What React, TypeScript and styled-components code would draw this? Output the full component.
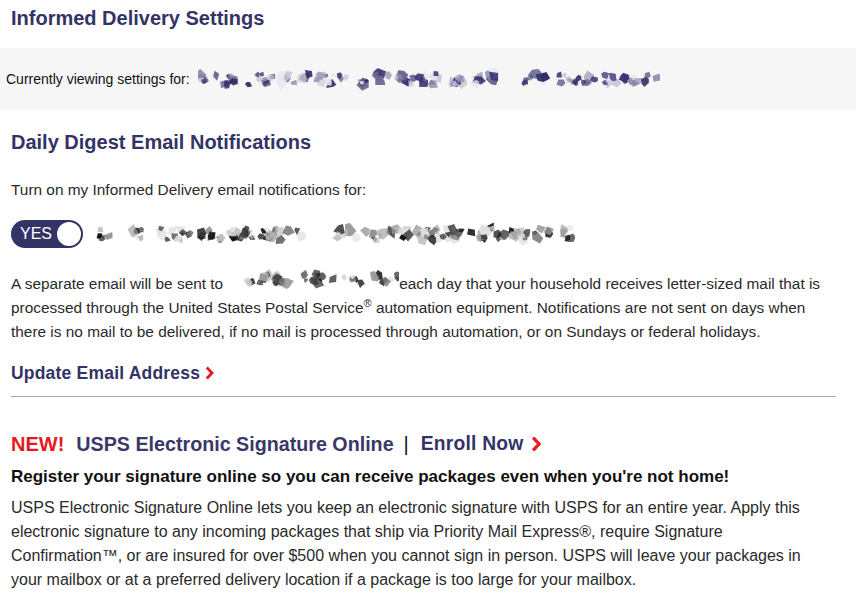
import React from "react";
import styled, { createGlobalStyle } from "styled-components";

const NAVY = "#333366";
const RED = "#e71921";

const GlobalStyle = createGlobalStyle`
  html, body { margin: 0; padding: 0; background: #ffffff; }
  body {
    font-family: "Liberation Sans", Helvetica, Arial, sans-serif;
    color: #2a2a2a;
    -webkit-font-smoothing: antialiased;
  }
`;

const Page = styled.div`
  width: 856px;
  display: flex;
  flex-direction: column;
`;

const PageTitle = styled.h1`
  margin: 0;
  padding: 6px 11px 0;
  font-size: 20px;
  line-height: 24px;
  font-weight: 700;
  color: ${NAVY};
`;

const ViewingBar = styled.div`
  margin-top: 18px;
  height: 62px;
  background: #f6f6f6;
  display: flex;
  align-items: center;
  gap: 8px;
  padding-left: 6px;
  font-size: 14px;
  color: #111;
`;

const Section = styled.section`
  padding: 0 20px 0 11px;
  display: flex;
  flex-direction: column;
  align-items: flex-start;
`;

const SectionTitle = styled.h2`
  margin: 20px 0 0;
  font-size: 20px;
  line-height: 24px;
  font-weight: 700;
  color: ${NAVY};
`;

const Text = styled.p<{ $top: number; $size: number }>`
  margin: ${(p) => p.$top}px 0 0;
  font-size: ${(p) => p.$size}px;
  line-height: 24px;
  color: #2a2a2a;
  white-space: nowrap;
`;

const ToggleRow = styled.div`
  margin-top: 18px;
  display: flex;
  align-items: center;
  gap: 12px;
`;

const Toggle = styled.button`
  width: 72px;
  height: 28px;
  border: none;
  border-radius: 14px;
  background: ${NAVY};
  color: #fff;
  display: flex;
  align-items: center;
  justify-content: space-between;
  padding: 0 2px 0 9px;
  font-family: inherit;
  font-size: 16px;
  cursor: pointer;
`;

const Knob = styled.span`
  width: 24px;
  height: 24px;
  border-radius: 50%;
  background: #fff;
`;

const InlineRedact = styled.span`
  display: inline-block;
  vertical-align: middle;
  margin: -4px 0 0 21px;
`;

const ActionLink = styled.a<{ $top: number; $size: number; $gap: number }>`
  margin-top: ${(p) => p.$top}px;
  display: inline-flex;
  align-items: center;
  gap: ${(p) => p.$gap}px;
  font-size: ${(p) => p.$size}px;
  line-height: 24px;
  font-weight: 900;
  color: ${NAVY};
  text-decoration: none;
  letter-spacing: 0.2px;
  cursor: pointer;
`;

const Divider = styled.hr`
  align-self: stretch;
  margin: 11px 0 0;
  border: none;
  border-top: 1px solid #a8a8a8;
  width: 825px;
`;

const PromoHeading = styled.div`
  margin-top: 35px;
  display: flex;
  align-items: center;
  line-height: 24px;
`;

const NewTag = styled.span`
  font-size: 20px;
  font-weight: 700;
  color: ${RED};
  margin-right: 12px;
`;

const PromoTitle = styled.span`
  font-size: 19.7px;
  font-weight: 700;
  color: #3a3868;
`;

const Pipe = styled.span`
  font-size: 20px;
  color: #111;
  margin: 0 12px 0 10px;
`;

const PromoLead = styled.p`
  margin: 9px 0 0;
  font-size: 17px;
  line-height: 24px;
  font-weight: 700;
  color: #111;
  white-space: nowrap;
`;

function Chevron({ size = 14 }: { size?: number }) {
  return (
    <svg width={(size * 9) / 14} height={size} viewBox="0 0 9 14" aria-hidden>
      <polyline
        points="1.8,1.5 7,7 1.8,12.5"
        fill="none"
        stroke={RED}
        strokeWidth="2.8"
        strokeLinejoin="miter"
      />
    </svg>
  );
}

function mulberry32(a: number) {
  return function () {
    a |= 0;
    a = (a + 0x6d2b79f5) | 0;
    let t = Math.imul(a ^ (a >>> 15), 1 | a);
    t = (t + Math.imul(t ^ (t >>> 7), 61 | t)) ^ t;
    return ((t ^ (t >>> 14)) >>> 0) / 4294967296;
  };
}

type RedactProps = {
  width: number;
  height: number;
  seed: number;
  palette: string[];
  segments: [number, number][];
};

function Redacted({ width, height, seed, palette, segments }: RedactProps) {
  const rnd = mulberry32(seed);
  const shapes: { pts: string; fill: string; op: number }[] = [];
  segments.forEach(([a, b]) => {
    const len = b - a;
    const count = Math.max(2, Math.round(len / 3));
    for (let i = 0; i < count; i++) {
      const cx = a + rnd() * len;
      const cy = height / 2 + (rnd() - 0.5) * (height * 0.45);
      const r = 2.8 + rnd() * 4;
      const n = 4 + Math.floor(rnd() * 3);
      const pts: string[] = [];
      const rot = rnd() * Math.PI * 2;
      for (let k = 0; k < n; k++) {
        const ang = rot + (k / n) * Math.PI * 2 + (rnd() - 0.5) * 0.6;
        const rr = r * (0.6 + rnd() * 0.6);
        pts.push(`${(cx + Math.cos(ang) * rr).toFixed(1)},${(cy + Math.sin(ang) * rr).toFixed(1)}`);
      }
      shapes.push({
        pts: pts.join(" "),
        fill: palette[Math.floor(rnd() * palette.length)],
        op: 0.6 + rnd() * 0.4,
      });
    }
  });
  return (
    <svg width={width} height={height} viewBox={`0 0 ${width} ${height}`} aria-hidden>
      {shapes.map((s, i) => (
        <polygon key={i} points={s.pts} fill={s.fill} opacity={s.op} />
      ))}
    </svg>
  );
}

const purple = ["#2f2c66", "#35326e", "#3b3874", "#6d6a92", "#9b98b6", "#c9c7da", "#e6e5ee"];
const grays = ["#0d0d0d", "#1e1e1e", "#3c3c3c", "#6a6a6a", "#9a9a9a", "#c4c4c4", "#e2e2e2"];

export default function App() {
  return (
    <Page>
      <GlobalStyle />
      <PageTitle>Informed Delivery Settings</PageTitle>
      <ViewingBar>
        <span>Currently viewing settings for:</span>
        <Redacted
          width={466}
          height={24}
          seed={11}
          palette={purple}
          segments={[
            [0, 12],
            [18, 148],
            [162, 245],
            [253, 309],
            [325, 347],
            [360, 460],
          ]}
        />
      </ViewingBar>
      <Section>
        <SectionTitle>Daily Digest Email Notifications</SectionTitle>
        <Text $top={24} $size={15.4}>
          Turn on my Informed Delivery email notifications for:
        </Text>
        <ToggleRow>
          <Toggle type="button">
            <span>YES</span>
            <Knob />
          </Toggle>
          <Redacted
            width={480}
            height={26}
            seed={29}
            palette={grays}
            segments={[
              [2, 16],
              [34, 50],
              [65, 208],
              [235, 476],
            ]}
          />
        </ToggleRow>
        <Text $top={24} $size={15.4}>
          A separate email will be sent to
          <InlineRedact>
            <Redacted
              width={155}
              height={20}
              seed={5}
              palette={grays}
              segments={[
                [2, 11],
                [16, 90],
                [98, 118],
                [130, 155],
              ]}
            />
          </InlineRedact>
          each day that your household receives letter-sized mail that is
          <br />
          processed through the United States Postal Service<sup style={{ fontSize: 11, lineHeight: 0 }}>®</sup>{" "}
          automation equipment. Notifications are not sent on days when
          <br />
          there is no mail to be delivered, if no mail is processed through automation, or on Sundays or federal holidays.
        </Text>
        <ActionLink $top={17} $size={17.5} $gap={5}>
          Update Email Address
          <Chevron />
        </ActionLink>
        <Divider />
        <PromoHeading>
          <NewTag>NEW!</NewTag>
          <PromoTitle>USPS Electronic Signature Online</PromoTitle>
          <Pipe>|</Pipe>
          <ActionLink $top={0} $size={19.3} $gap={7}>
            Enroll Now
            <Chevron size={16} />
          </ActionLink>
        </PromoHeading>
        <PromoLead>Register your signature online so you can receive packages even when you're not home!</PromoLead>
        <Text $top={7} $size={16}>
          USPS Electronic Signature Online lets you keep an electronic signature with USPS for an entire year. Apply this
          <br />
          electronic signature to any incoming packages that ship via Priority Mail Express®, require Signature
          <br />
          Confirmation™, or are insured for over $500 when you cannot sign in person. USPS will leave your packages in
          <br />
          your mailbox or at a preferred delivery location if a package is too large for your mailbox.
        </Text>
      </Section>
    </Page>
  );
}
